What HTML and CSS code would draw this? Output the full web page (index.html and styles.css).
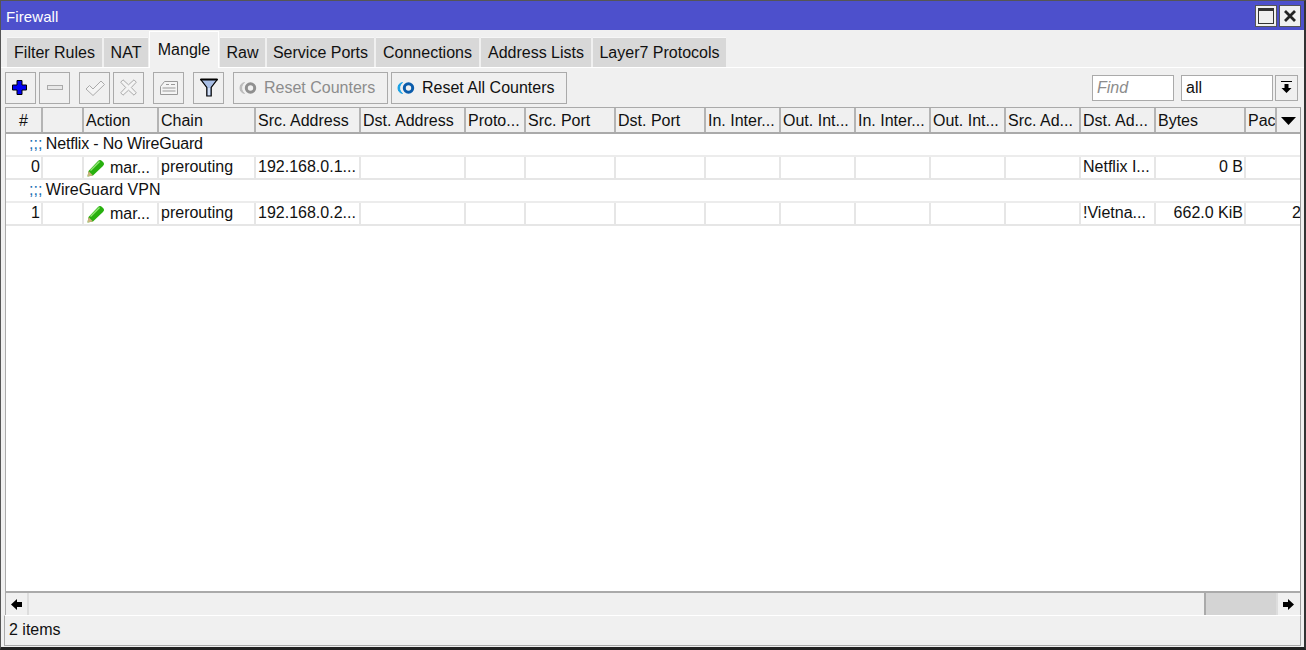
FILE: index.html
```html
<!DOCTYPE html>
<html lang="en">
<head>
<meta charset="utf-8">
<title>Firewall</title>
<link rel="stylesheet" href="styles.css">
</head>
<body>
<div class="window">
  <header class="titlebar">
    <span class="title">Firewall</span>
    <div class="winbtns">
      <button class="winbtn"><svg width="18" height="18" viewBox="0 0 18 18"><rect x="1.500" y="1.500" width="15" height="15" fill="none" stroke="#333"/><rect x="1" y="1" width="16" height="3" fill="#333"/></svg></button>
      <button class="winbtn"><svg width="18" height="18" viewBox="0 0 18 18"><path d="M4 4l10 10M14 4l-10 10" stroke="#222" stroke-width="2.800" fill="none"/></svg></button>
    </div>
  </header>
  <nav class="tabs">
    <span class="tab t1">Filter Rules</span>
    <span class="tab t2">NAT</span>
    <span class="tab active">Mangle</span>
    <span class="tab t3">Raw</span>
    <span class="tab t4">Service Ports</span>
    <span class="tab t5">Connections</span>
    <span class="tab t6">Address Lists</span>
    <span class="tab t7">Layer7 Protocols</span>
  </nav>
  <div class="panel">
    <div class="toolbar">
      <button class="tool plus"><svg width="15" height="15" viewBox="0 0 15 15"><path d="M5 .5h5v4.500h4.500v5h-4.500v4.500h-5v-4.500h-4.500v-5h4.500z" fill="#0000f0" stroke="#000"/></svg></button>
      <button class="tool"><svg width="16" height="6" viewBox="0 0 16 6"><rect x=".5" y=".5" width="15" height="4" fill="#e8e8e8" stroke="#aaa"/></svg></button>
      <button class="tool g2"><svg width="20" height="16" viewBox="0 0 20 16"><path d="M1 9l3.500-3.500 3.500 3.500 8-8 3.500 3.500-11.500 11z" fill="#f4f4f4" stroke="#aaa"/></svg></button>
      <button class="tool"><svg width="17" height="17" viewBox="0 0 17 17"><path d="M3 .8l5.500 5 5.500-5 2.300 2.400-5 5.300 5 5.300-2.300 2.400-5.500-5-5.500 5-2.300-2.400 5-5.300-5-5.300z" fill="#f4f4f4" stroke="#aaa"/></svg></button>
      <button class="tool g3"><svg width="18" height="14" viewBox="0 0 18 14"><path d="M.5 5.500l4-5h13v13h-17z" fill="#f4f4f4" stroke="#999"/><path d="M6 3.500h3M11 3.500h4M2.500 7h13M2.500 10h13" stroke="#999"/></svg></button>
      <button class="tool g3"><svg width="18" height="19" viewBox="0 0 18 19"><path d="M.8 1.500h16.400l-6 8v8.500h-4.400v-8.500z" fill="#a9bfe6" stroke="#000" stroke-width="1.200"/><path d="M.5 1.500h17" stroke="#000" stroke-width="2"/><path d="M9 10v7" stroke="#dfe8f8" stroke-width="1.500"/></svg></button>
      <button class="tool wide w1 disabled g3"><svg width="18" height="12" viewBox="0 0 18 12"><circle cx="11.500" cy="6" r="4.200" fill="none" stroke="#8f8f8f" stroke-width="3"/><path d="M5.500.6a5.500 5.500 0 0 0 0 10.800 6.500 6.500 0 0 1 0-10.800z" fill="#bbb" stroke="#bbb"/></svg>Reset Counters</button>
      <button class="tool wide w2"><svg width="18" height="12" viewBox="0 0 18 12"><circle cx="11.500" cy="6" r="4.200" fill="none" stroke="#0b5cab" stroke-width="3"/><path d="M5.500.6a5.500 5.500 0 0 0 0 10.800 6.500 6.500 0 0 1 0-10.800z" fill="#14a0e6" stroke="#14a0e6"/></svg>Reset All Counters</button>
      <span class="spacer"></span>
      <span class="field find">Find</span>
      <span class="field all">all</span>
      <button class="drop"><svg width="13" height="13" viewBox="0 0 13 13"><path d="M1 .5h11" stroke="#000"/><path d="M4.500 3h4v4h3l-5 5-5-5h3z" fill="#000"/></svg></button>
    </div>
    <div class="table">
      <div class="row head">
        <span class="c ctr">#</span><span class="c"></span><span class="c">Action</span><span class="c">Chain</span><span class="c">Src. Address</span><span class="c">Dst. Address</span><span class="c">Proto...</span><span class="c">Src. Port</span><span class="c">Dst. Port</span><span class="c">In. Inter...</span><span class="c">Out. Int...</span><span class="c">In. Inter...</span><span class="c">Out. Int...</span><span class="c">Src. Ad...</span><span class="c">Dst. Ad...</span><span class="c">Bytes</span><span class="c pac">Pac</span><span class="c menu"><svg width="15" height="8" viewBox="0 0 15 8"><path d="M0 0h15l-7.500 8z" fill="#000"/></svg></span>
      </div>
      <div class="comment"><span class="semi">;;;</span> <span class="tight">Netflix - No WireGuard</span></div>
      <div class="row data">
        <span class="c r">0</span><span class="c"></span><span class="c act"><svg class="pen" width="17" height="18" viewBox="0 0 17 18"><path d="M.5 17.500l1-5.500 9.500-10a2.800 2.800 0 0 1 4 0l1 1a2.800 2.800 0 0 1 0 4l-10 9.500z" fill="#27b00e"/><path d="M3.500 11.500l9-9" stroke="#8fe673" stroke-width="1.500"/><path d="M.5 17.500l1-5.500 4.500 4.500z" fill="#c9b27c"/></svg>mar...</span><span class="c">prerouting</span><span class="c">192.168.0.1...</span><span class="c"></span><span class="c"></span><span class="c"></span><span class="c"></span><span class="c"></span><span class="c"></span><span class="c"></span><span class="c"></span><span class="c"></span><span class="c">Netflix I...</span><span class="c r">0 B</span><span class="c pacv"></span>
      </div>
      <div class="comment"><span class="semi">;;;</span> WireGuard VPN</div>
      <div class="row data">
        <span class="c r">1</span><span class="c"></span><span class="c act"><svg class="pen" width="17" height="18" viewBox="0 0 17 18"><path d="M.5 17.500l1-5.500 9.500-10a2.800 2.800 0 0 1 4 0l1 1a2.800 2.800 0 0 1 0 4l-10 9.500z" fill="#27b00e"/><path d="M3.500 11.500l9-9" stroke="#8fe673" stroke-width="1.500"/><path d="M.5 17.500l1-5.500 4.500 4.500z" fill="#c9b27c"/></svg>mar...</span><span class="c">prerouting</span><span class="c">192.168.0.2...</span><span class="c"></span><span class="c"></span><span class="c"></span><span class="c"></span><span class="c"></span><span class="c"></span><span class="c"></span><span class="c"></span><span class="c"></span><span class="c">!Vietna...</span><span class="c r">662.0 KiB</span><span class="c pacv">2</span>
      </div>
      <div class="fill"></div>
      <div class="hscroll">
        <button class="arrow left"><svg width="12" height="11" viewBox="0 0 12 11"><path d="M0 5.500l6-5.500v3h5v5h-5v3z" fill="#000"/></svg></button>
        <div class="track"><div class="thumb"></div></div>
        <button class="arrow right"><svg width="12" height="11" viewBox="0 0 12 11"><path d="M12 5.500l-6-5.500v3h-5v5h5v3z" fill="#000"/></svg></button>
      </div>
    </div>
    <footer class="status">2 items</footer>
  </div>
</div>
</body>
</html>
```
FILE: styles.css
```css
* { box-sizing: border-box; }
html, body { margin: 0; padding: 0; height: 100%; overflow: hidden; background: #f0f0f0; }
body { font: 16px/18px "Liberation Sans", Arial, sans-serif; color: #111; }
button { font: inherit; color: inherit; margin: 0; padding: 0; background: #f0f0f0; }

.window { width: 1306px; height: 650px; display: flex; flex-direction: column; background: #f0f0f0; border: 1px solid #555; border-bottom: 3px solid #222; border-right: 2px solid #333; }

.titlebar { height: 29px; flex: none; background: #4d50cc; display: flex; align-items: center; justify-content: space-between; padding: 0 3px 0 5px; }
.title { color: #fff; font-size: 15px; letter-spacing: .1px; position: relative; top: 1px; }
.winbtns { display: flex; gap: 2px; }
.winbtn { width: 22px; height: 22px; border: 1px solid #555; background: #f0f0f0; display: flex; align-items: center; justify-content: center; }

.tabs { height: 38px; flex: none; display: flex; align-items: flex-end; padding-left: 6px; gap: 2px; }
.tab { height: 31px; background: #d8d8d8; display: flex; align-items: center; justify-content: center; border-top: 1px solid #f6f6f6; }
.t1 { width: 95px; }
.t2 { width: 44px; }
.active { width: 70px; height: 37px; margin: 0 -1px; background: #f0f0f0; border: 1px solid #fff; border-bottom: 0; position: relative; z-index: 1; }
.t3 { width: 45px; }
.t4 { width: 107px; }
.t5 { width: 103px; }
.t6 { width: 110px; }
.t7 { width: 133px; }

.panel { flex: 1; min-height: 0; display: flex; flex-direction: column; padding: 0 3px 1px 4px; border-top: 1px solid #fff; margin-top: -1px; }

.toolbar { height: 39px; flex: none; display: flex; align-items: center; padding: 0 1px 0 0; gap: 3px; }
.tool { width: 31px; height: 32px; border: 1px solid #aaa; background: #f0f0f0; display: flex; align-items: center; justify-content: center; flex: none; }
.plus { padding-right: 3px; }
.g2, .g3 { margin-left: 6px; }
.wide { gap: 7px; justify-content: flex-start; padding-left: 5px; }
.w1 { width: 155px; }
.w2 { width: 176px; }
.disabled { color: #8c8c8c; }
.spacer { flex: 1; }
.field { height: 26px; background: #fff; border: 1px solid #aaa; padding: 3px; display: block; }
.find { width: 82px; color: #8c8c8c; font-style: italic; padding-left: 4px; margin-right: 4px; }
.all { width: 92px; padding-left: 4px; }
.drop { width: 23px; height: 26px; border: 1px solid #aaa; display: flex; align-items: center; justify-content: center; margin-left: -1px; margin-right: 2px; }

.table { flex: 1; min-height: 0; display: flex; flex-direction: column; border-top: 1px solid #aaa; border-left: 1px solid #aaa; border-right: 1px solid #999; background: #fff; overflow: hidden; }
.row { display: grid; grid-template-columns: 37px 41px 75px 97px 105px 105px 60px 90px 90px 75px 75px 75px 75px 75px 75px 90px 31px 23px; flex: none; }
.c { display: block; white-space: nowrap; overflow: hidden; padding: 0 2px; }
.r { text-align: right; }
.head { height: 26px; background: #f0f0f0; border-bottom: 2px solid #aaa; }
.head .c { border-right: 2px solid #b4b4b4; padding: 4px 2px 0; }
.head .ctr { text-align: center; }
.menu { display: flex; align-items: flex-start; justify-content: center; border-right: 0; }
.head .menu { padding-top: 9px; border-right: 0; }
.comment { height: 23px; flex: none; padding: 1px 0 0 23px; background: #fff; border-bottom: 2px solid #ececec; }
.semi { color: #1b6fb5; margin-right: -1px; }
.tight { letter-spacing: -.18px; }
.data { height: 23px; border-bottom: 2px solid #e6e6e6; }
.data .c { border-right: 2px solid #e6e6e6; padding-top: 1px; }
.data .r { padding-right: 1px; }
.data .act { display: flex; align-items: center; gap: 6px; padding: 0 0 0 3px; }
.data .pacv { grid-column: span 2; border-right: 0; padding-left: 46px; }
.fill { flex: 1; min-height: 0; background: #fff; }
.hscroll { height: 24px; flex: none; display: flex; background: #f0f0f0; border-top: 2px solid #aaa; }
.arrow { width: 23px; border: 0; display: flex; align-items: center; justify-content: center; background: #f0f0f0; }
.left { border-right: 2px solid #ddd; }
.right { width: 24px; padding-right: 2px; border-left: 2px solid #ddd; }
.track { flex: 1; display: flex; justify-content: flex-end; }
.thumb { width: 72px; background: #d4d4d4; border-left: 2px solid #aaa; }
.status { height: 31px; flex: none; margin-left: -1px; padding: 5px 0 0 4px; border: 1px solid #aaa; border-top-color: #fff; }
```
